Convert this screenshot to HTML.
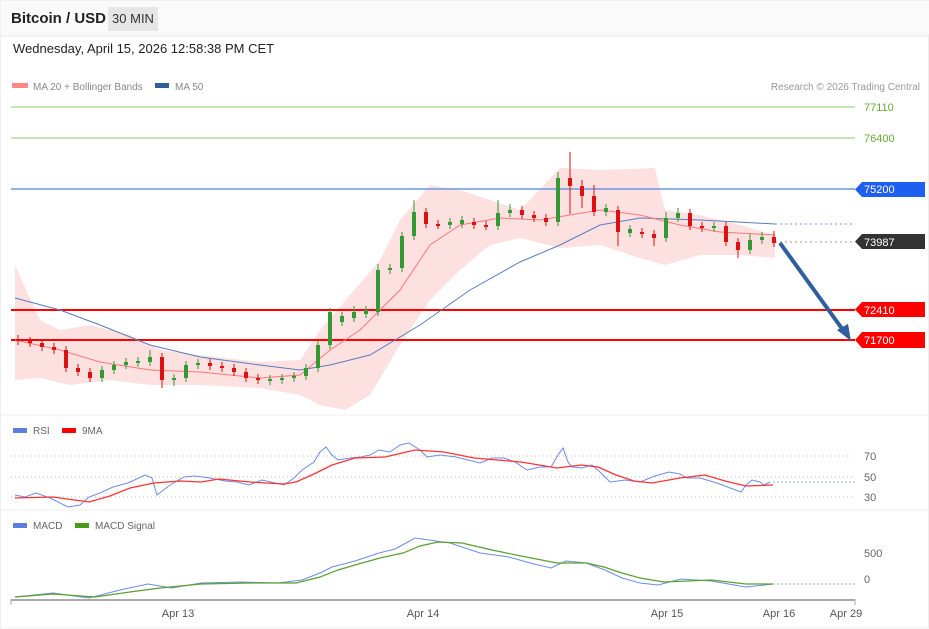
<!DOCTYPE html>
<html><head><meta charset="utf-8"><style>
body{margin:0;background:#fff;font-family:"Liberation Sans",sans-serif;}
.wrap{position:relative;width:929px;height:629px;overflow:hidden;}
.hdr{position:absolute;left:0;top:0;width:928px;height:35px;background:#fafafa;border:1px solid #f0f0f0;}
.t{position:absolute;left:11px;top:10px;font-weight:bold;font-size:15px;color:#222;}
.tag{position:absolute;left:108px;top:7px;width:50px;height:24px;background:#e6e6e6;font-size:13px;color:#333;text-align:center;line-height:24px;}
.dt{position:absolute;left:13px;top:41px;font-size:13px;color:#222;}
svg{position:absolute;left:0;top:0;}
</style></head><body><div class="wrap">
<div class="hdr"></div>
<div class="t">Bitcoin / USD</div><div class="tag">30 MIN</div>
<div class="dt">Wednesday, April 15, 2026 12:58:38 PM CET</div>
<svg width="929" height="629" font-family="Liberation Sans, sans-serif">
<rect x="0.5" y="35" width="928" height="593" fill="none" stroke="#eee"/>
<line x1="0" y1="415" x2="929" y2="415" stroke="#eee"/>
<line x1="0" y1="510" x2="929" y2="510" stroke="#eee"/>
<rect x="12" y="83" width="16" height="5" fill="#f88"/>
<text x="33" y="90" font-size="10" fill="#888">MA 20 + Bollinger Bands</text>
<rect x="155" y="83" width="14" height="5" fill="#33609a"/>
<text x="175" y="90" font-size="10" fill="#888">MA 50</text>
<text x="920" y="90" font-size="10" fill="#999" text-anchor="end">Research © 2026 Trading Central</text>
<polygon fill="#fde0e0" points="15,265 40,320 60,330 90,325 130,335 160,350 200,355 260,362 300,360 320,330 350,295 380,260 400,220 430,185 460,190 490,200 520,210 560,168 600,170 655,168 665,210 700,215 740,225 775,235 775,258 740,255 700,255 665,265 640,258 600,245 560,248 520,238 490,245 460,270 430,300 400,345 370,395 345,410 320,405 300,395 260,388 200,385 150,385 110,380 70,385 40,378 15,380"/>
<line x1="11" y1="107" x2="855" y2="107" stroke="#8c6" stroke-width="1"/>
<line x1="11" y1="138" x2="855" y2="138" stroke="#8c6" stroke-width="1"/>
<line x1="11" y1="189" x2="855" y2="189" stroke="#6f95e0" stroke-width="1.5"/>
<line x1="11" y1="310" x2="855" y2="310" stroke="#f00" stroke-width="2"/>
<line x1="11" y1="340" x2="855" y2="340" stroke="#f00" stroke-width="2"/>
<line x1="775" y1="224" x2="855" y2="224" stroke="#6f95e0" stroke-dasharray="2,3"/>
<line x1="775" y1="242" x2="855" y2="242" stroke="#999" stroke-dasharray="2,3"/>
<polyline fill="none" stroke="#5a7cc0" stroke-width="1" points="15,298 60,310 100,325 150,345 200,357 260,365 300,370 330,365 370,355 420,325 470,290 520,262 560,245 600,225 640,218 700,220 775,224"/>
<polyline fill="none" stroke="#f77" stroke-width="1" points="15,340 60,350 100,362 150,370 200,372 260,378 300,375 330,350 360,330 400,290 430,245 460,225 500,218 540,220 570,215 600,210 640,215 680,225 720,232 775,235"/>
<g stroke-width="1" id="c">
<g stroke="#d11">
<line x1="18" y1="335" x2="18" y2="345"/><line x1="30" y1="337" x2="30" y2="347"/><line x1="42" y1="339" x2="42" y2="351"/><line x1="54" y1="343" x2="54" y2="354"/><line x1="66" y1="346" x2="66" y2="372"/><line x1="78" y1="364" x2="78" y2="376"/><line x1="90" y1="368" x2="90" y2="382"/><line x1="162" y1="353" x2="162" y2="388"/><line x1="210" y1="359" x2="210" y2="370"/><line x1="222" y1="362" x2="222" y2="372"/><line x1="234" y1="364" x2="234" y2="376"/><line x1="246" y1="368" x2="246" y2="382"/><line x1="258" y1="374" x2="258" y2="384"/><line x1="426" y1="208" x2="426" y2="228"/><line x1="438" y1="220" x2="438" y2="229"/><line x1="474" y1="218" x2="474" y2="229"/><line x1="486" y1="221" x2="486" y2="230"/><line x1="522" y1="206" x2="522" y2="219"/><line x1="534" y1="211" x2="534" y2="222"/><line x1="546" y1="214" x2="546" y2="226"/><line x1="570" y1="152" x2="570" y2="214"/><line x1="582" y1="180" x2="582" y2="208"/><line x1="594" y1="185" x2="594" y2="216"/><line x1="618" y1="206" x2="618" y2="246"/><line x1="642" y1="228" x2="642" y2="238"/><line x1="654" y1="230" x2="654" y2="246"/><line x1="690" y1="209" x2="690" y2="230"/><line x1="702" y1="222" x2="702" y2="232"/><line x1="726" y1="222" x2="726" y2="246"/><line x1="738" y1="238" x2="738" y2="258"/><line x1="774" y1="231" x2="774" y2="247"/>
</g>
<g stroke="#d11" stroke-width="4">
<line x1="18" y1="339" x2="18" y2="341"/><line x1="30" y1="341" x2="30" y2="343"/><line x1="42" y1="343" x2="42" y2="347"/><line x1="54" y1="347" x2="54" y2="350"/><line x1="66" y1="350" x2="66" y2="368"/><line x1="78" y1="368" x2="78" y2="372"/><line x1="90" y1="372" x2="90" y2="378"/><line x1="162" y1="357" x2="162" y2="380"/><line x1="210" y1="363" x2="210" y2="366"/><line x1="222" y1="366" x2="222" y2="368"/><line x1="234" y1="368" x2="234" y2="372"/><line x1="246" y1="372" x2="246" y2="378"/><line x1="258" y1="378" x2="258" y2="380"/><line x1="426" y1="212" x2="426" y2="224"/><line x1="438" y1="224" x2="438" y2="226"/><line x1="474" y1="222" x2="474" y2="225"/><line x1="486" y1="225" x2="486" y2="227"/><line x1="522" y1="210" x2="522" y2="215"/><line x1="534" y1="215" x2="534" y2="218"/><line x1="546" y1="218" x2="546" y2="222"/><line x1="570" y1="178" x2="570" y2="186"/><line x1="582" y1="186" x2="582" y2="196"/><line x1="594" y1="196" x2="594" y2="212"/><line x1="618" y1="210" x2="618" y2="232"/><line x1="642" y1="232" x2="642" y2="234"/><line x1="654" y1="234" x2="654" y2="238"/><line x1="690" y1="213" x2="690" y2="226"/><line x1="702" y1="226" x2="702" y2="228"/><line x1="726" y1="226" x2="726" y2="242"/><line x1="738" y1="242" x2="738" y2="250"/><line x1="774" y1="237" x2="774" y2="243"/>
</g>
<g stroke="#393">
<line x1="102" y1="366" x2="102" y2="382"/><line x1="114" y1="361" x2="114" y2="374"/><line x1="126" y1="358" x2="126" y2="369"/><line x1="138" y1="357" x2="138" y2="367"/><line x1="150" y1="350" x2="150" y2="366"/><line x1="174" y1="374" x2="174" y2="386"/><line x1="186" y1="361" x2="186" y2="382"/><line x1="198" y1="359" x2="198" y2="369"/><line x1="270" y1="375" x2="270" y2="385"/><line x1="282" y1="374" x2="282" y2="384"/><line x1="294" y1="372" x2="294" y2="382"/><line x1="306" y1="364" x2="306" y2="380"/><line x1="318" y1="341" x2="318" y2="372"/><line x1="330" y1="308" x2="330" y2="349"/><line x1="342" y1="312" x2="342" y2="326"/><line x1="354" y1="306" x2="354" y2="322"/><line x1="366" y1="306" x2="366" y2="318"/><line x1="378" y1="264" x2="378" y2="316"/><line x1="390" y1="264" x2="390" y2="274"/><line x1="402" y1="232" x2="402" y2="272"/><line x1="414" y1="200" x2="414" y2="240"/><line x1="450" y1="218" x2="450" y2="229"/><line x1="462" y1="216" x2="462" y2="228"/><line x1="498" y1="200" x2="498" y2="230"/><line x1="510" y1="204" x2="510" y2="217"/><line x1="558" y1="172" x2="558" y2="226"/><line x1="606" y1="204" x2="606" y2="216"/><line x1="630" y1="225" x2="630" y2="237"/><line x1="666" y1="212" x2="666" y2="242"/><line x1="678" y1="208" x2="678" y2="222"/><line x1="714" y1="222" x2="714" y2="232"/><line x1="750" y1="234" x2="750" y2="254"/><line x1="762" y1="232" x2="762" y2="244"/>
</g>
<g stroke="#393" stroke-width="4">
<line x1="102" y1="370" x2="102" y2="378"/><line x1="114" y1="365" x2="114" y2="370"/><line x1="126" y1="362" x2="126" y2="365"/><line x1="138" y1="361" x2="138" y2="363"/><line x1="150" y1="357" x2="150" y2="362"/><line x1="174" y1="378" x2="174" y2="380"/><line x1="186" y1="365" x2="186" y2="378"/><line x1="198" y1="363" x2="198" y2="365"/><line x1="270" y1="379" x2="270" y2="381"/><line x1="282" y1="378" x2="282" y2="380"/><line x1="294" y1="376" x2="294" y2="378"/><line x1="306" y1="368" x2="306" y2="376"/><line x1="318" y1="345" x2="318" y2="368"/><line x1="330" y1="312" x2="330" y2="345"/><line x1="342" y1="316" x2="342" y2="322"/><line x1="354" y1="312" x2="354" y2="318"/><line x1="366" y1="310" x2="366" y2="314"/><line x1="378" y1="270" x2="378" y2="312"/><line x1="390" y1="268" x2="390" y2="270"/><line x1="402" y1="236" x2="402" y2="268"/><line x1="414" y1="212" x2="414" y2="236"/><line x1="450" y1="222" x2="450" y2="225"/><line x1="462" y1="220" x2="462" y2="224"/><line x1="498" y1="213" x2="498" y2="226"/><line x1="510" y1="210" x2="510" y2="213"/><line x1="558" y1="178" x2="558" y2="222"/><line x1="606" y1="208" x2="606" y2="212"/><line x1="630" y1="229" x2="630" y2="233"/><line x1="666" y1="218" x2="666" y2="238"/><line x1="678" y1="213" x2="678" y2="218"/><line x1="714" y1="226" x2="714" y2="228"/><line x1="750" y1="240" x2="750" y2="250"/><line x1="762" y1="237" x2="762" y2="240"/>
</g>
</g>
<line x1="780" y1="243" x2="843" y2="330" stroke="#2f5e9e" stroke-width="4"/>
<polygon points="851,341 837,330 848,324" fill="#2f5e9e"/>
<g font-size="11">
<text x="864" y="111" fill="#6a3">77110</text>
<text x="864" y="142" fill="#6a3">76400</text>
<polygon points="862,182 925,182 925,197 862,197 855,189.5" fill="#1e5ef0"/><text x="864" y="193" fill="#fff">75200</text>
<polygon points="862,234 925,234 925,249 862,249 855,241.5" fill="#333"/><text x="864" y="246" fill="#fff">73987</text>
<polygon points="862,302 925,302 925,317 862,317 855,309.5" fill="#f00"/><text x="864" y="314" fill="#fff">72410</text>
<polygon points="862,332 925,332 925,348 862,348 855,340" fill="#f00"/><text x="864" y="344" fill="#fff">71700</text>
</g>
<rect x="13" y="428" width="14" height="5" fill="#5b7ee0"/><text x="33" y="434" font-size="10" fill="#666">RSI</text>
<rect x="62" y="428" width="14" height="5" fill="#f00"/><text x="82" y="434" font-size="10" fill="#666">9MA</text>
<g stroke="#bbb" stroke-dasharray="1,3"><line x1="11" y1="456" x2="855" y2="456"/><line x1="11" y1="477" x2="855" y2="477"/><line x1="11" y1="497" x2="855" y2="497"/></g>
<line x1="773" y1="482" x2="855" y2="482" stroke="#9ab" stroke-dasharray="2,2"/>
<g font-size="11" fill="#666"><text x="864" y="460">70</text><text x="864" y="481">50</text><text x="864" y="501">30</text></g>
<polyline fill="none" stroke="#6d8ce8" points="15,495 25,497 36,493 50,498 68,507 80,505 89,497 100,493 113,487 128,483 145,475 152,478 157,495 170,485 184,477 195,476 210,478 225,481 237,482 249,485 262,480 284,485 294,478 302,470 314,462 320,452 326,447 332,455 338,460 350,458 361,457 370,455 379,450 390,452 400,445 409,443 420,450 427,457 440,455 456,457 468,460 480,463 492,458 504,458 515,462 527,470 540,467 551,467 558,455 563,448 568,462 572,467 582,468 592,465 600,472 610,482 625,480 640,482 655,476 669,472 680,474 687,478 700,478 717,483 730,488 741,492 746,485 752,480 760,482 764,485 770,482"/>
<polyline fill="none" stroke="#f33" stroke-width="1.3" points="15,498 53,497 89,502 110,496 130,488 154,483 180,481 201,482 219,479 250,482 284,484 296,482 314,474 332,465 355,458 385,457 415,450 444,452 474,458 521,462 557,468 581,465 598,467 616,475 634,481 652,483 680,478 705,475 725,481 746,486 773,485"/>
<rect x="13" y="523" width="14" height="5" fill="#5b7ee0"/><text x="33" y="529" font-size="10" fill="#666">MACD</text>
<rect x="75" y="523" width="14" height="5" fill="#4a9a1a"/><text x="95" y="529" font-size="10" fill="#666">MACD Signal</text>
<g font-size="11" fill="#666"><text x="864" y="557">500</text><text x="864" y="583">0</text></g>
<line x1="773" y1="584" x2="855" y2="584" stroke="#9ab" stroke-dasharray="2,2"/>
<polyline fill="none" stroke="#6d8ce8" points="15,597 53,593 89,598 120,590 148,584 172,588 201,583 240,582 278,583 302,580 320,573 332,567 355,561 379,553 395,549 415,538 450,543 480,553 509,557 530,563 551,568 566,561 586,563 605,570 622,578 640,583 658,585 681,579 711,581 746,587 773,584"/>
<polyline fill="none" stroke="#5aa02c" stroke-width="1.2" points="15,597 53,594 95,597 130,592 160,588 201,584 250,583 296,583 320,577 338,570 355,565 380,558 403,553 420,546 438,542 462,543 492,550 521,556 557,563 586,563 604,567 622,573 640,578 664,582 711,580 746,584 773,584"/>
<line x1="11" y1="600" x2="855" y2="600" stroke="#aaa" stroke-width="2"/>
<line x1="11" y1="599" x2="11" y2="605" stroke="#aaa"/><line x1="855" y1="599" x2="855" y2="605" stroke="#aaa"/>
<g font-size="11" fill="#555" text-anchor="middle"><text x="178" y="617">Apr 13</text><text x="423" y="617">Apr 14</text><text x="667" y="617">Apr 15</text><text x="779" y="617">Apr 16</text><text x="846" y="617">Apr 29</text></g>
</svg></div></body></html>
